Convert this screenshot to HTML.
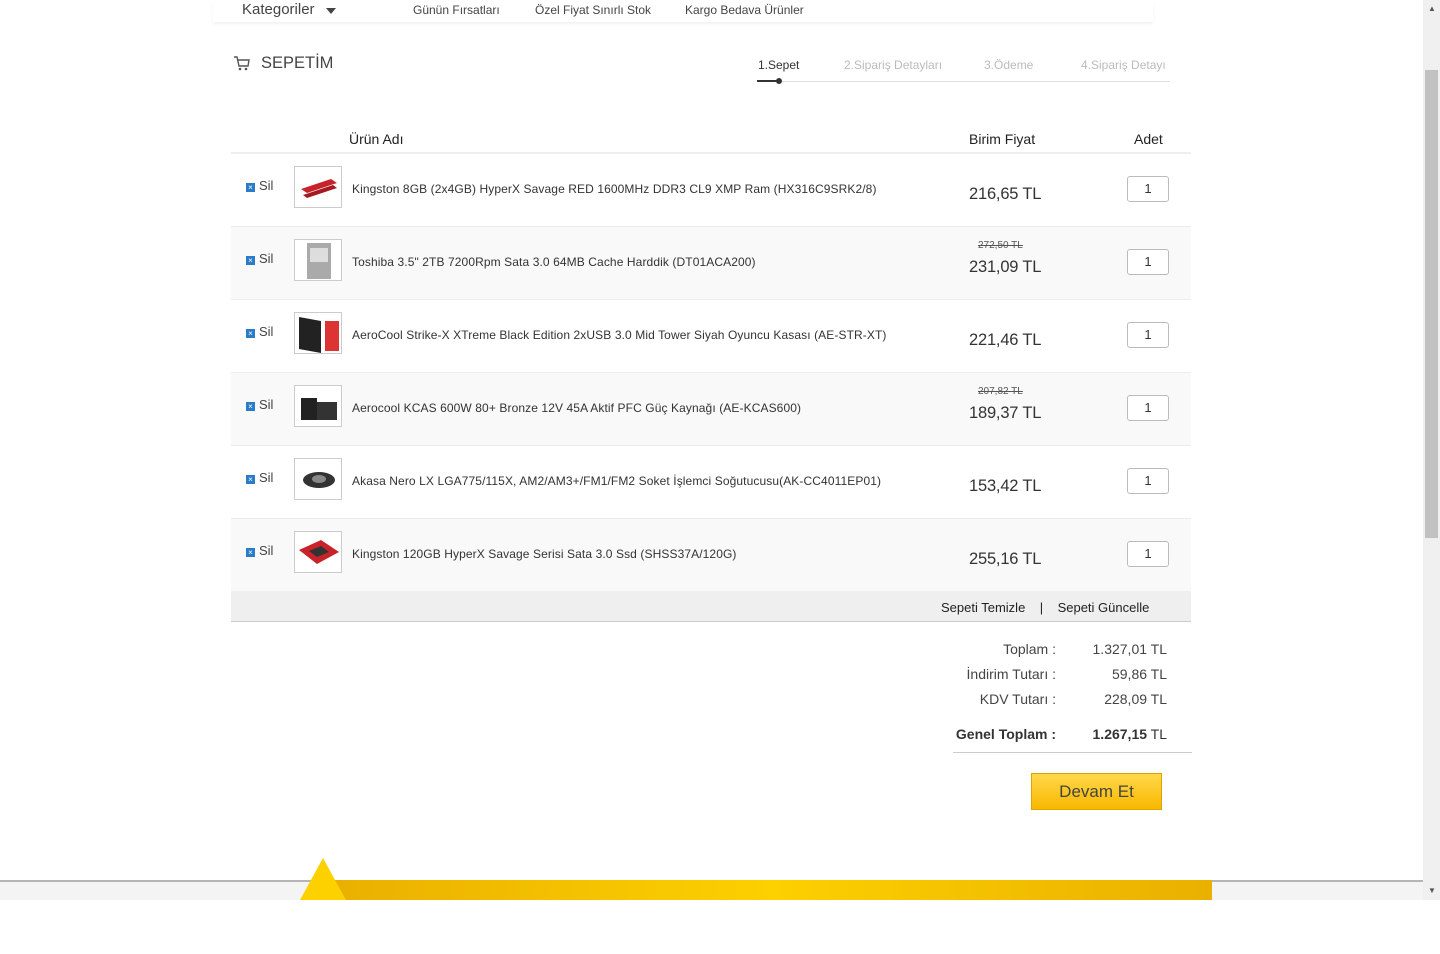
<!DOCTYPE html>
<html><head><meta charset="utf-8"><style>
*{margin:0;padding:0;box-sizing:border-box}
body{width:1440px;height:954px;background:#fff;font-family:"Liberation Sans",Arial,sans-serif;color:#333;position:relative;overflow:hidden}
.a{position:absolute;white-space:nowrap}
.row{position:absolute;left:231px;width:960px;height:73px;border-bottom:1px solid #ececec}
.sil{position:absolute;left:15px;top:24px;font-size:13px;color:#444}
.sil i{display:inline-block;width:9px;height:9px;background:#2b7bc8;margin-right:4px;vertical-align:0;color:#fff;font-size:8px;line-height:9px;text-align:center;font-style:normal}
.img{position:absolute;left:63px;top:12px;width:48px;height:42px;border:1px solid #ccc;background:#fff;overflow:hidden}
.nm{position:absolute;left:121px;top:28px;font-size:12px;color:#333;letter-spacing:0.1px}
.pr{position:absolute;left:738px;top:31px;font-size:16.5px;color:#333;letter-spacing:-0.2px}
.old{position:absolute;left:747px;top:13px;font-size:10px;color:#555;text-decoration:line-through}
.q{position:absolute;left:896px;top:22px;width:42px;height:26px;border:1px solid #bbb;border-radius:3px;background:#fff;font-size:13px;text-align:center;line-height:24px}
</style></head><body>
<div class="a" style="left:213px;top:0;width:940px;height:22px;box-shadow:0 2px 3px rgba(0,0,0,.06)"></div>
<div class="a" style="left:242px;top:1px;font-size:15px;color:#444">Kategoriler</div>
<div class="a" style="left:326px;top:8px;width:0;height:0;border-left:5px solid transparent;border-right:5px solid transparent;border-top:6px solid #444"></div>
<div class="a" style="left:413px;top:3px;font-size:12px;color:#444">Günün Fırsatları</div>
<div class="a" style="left:535px;top:3px;font-size:12px;color:#444">Özel Fiyat Sınırlı Stok</div>
<div class="a" style="left:685px;top:3px;font-size:12px;color:#444">Kargo Bedava Ürünler</div>
<svg class="a" style="left:234px;top:56px" width="16" height="15" viewBox="0 0 16 15"><path d="M0 1h3l2 9h9l1-6H4" fill="none" stroke="#555" stroke-width="1.4"/><circle cx="6" cy="13" r="1.3" fill="#555"/><circle cx="12" cy="13" r="1.3" fill="#555"/></svg>
<div class="a" style="left:261px;top:54px;font-size:16.5px;color:#444">SEPETİM</div>
<div class="a" style="left:758px;top:58px;font-size:12px;color:#333">1.Sepet</div>
<div class="a" style="left:844px;top:58px;font-size:12px;color:#bbb">2.Sipariş Detayları</div>
<div class="a" style="left:984px;top:58px;font-size:12px;color:#bbb">3.Ödeme</div>
<div class="a" style="left:1081px;top:58px;font-size:12px;color:#bbb">4.Sipariş Detayı</div>
<div class="a" style="left:757px;top:81px;width:413px;height:1px;background:#ddd"></div>
<div class="a" style="left:757px;top:80px;width:22px;height:2px;background:#333"></div>
<div class="a" style="left:776px;top:78px;width:6px;height:6px;border-radius:50%;background:#333"></div>
<div class="a" style="left:349px;top:131px;font-size:14px;color:#222">Ürün Adı</div>
<div class="a" style="left:969px;top:131px;font-size:14px;color:#222">Birim Fiyat</div>
<div class="a" style="left:1134px;top:131px;font-size:14px;color:#222">Adet</div>
<div class="a" style="left:231px;top:152px;width:960px;height:2px;background:#eee"></div>

<div class="row" style="top:154px;background:#fff"><div class="sil"><i>×</i>Sil</div><div class="img"><svg width="48" height="42"><path d="M6 22l30-10 6 4-30 10z" fill="#c8232a"/><path d="M8 28l30-10 4 3-30 10z" fill="#a51a20"/></svg></div><div class="nm">Kingston 8GB (2x4GB) HyperX Savage RED 1600MHz DDR3 CL9 XMP Ram (HX316C9SRK2/8)</div><div class="pr">216,65 TL</div><div class="q">1</div></div>
<div class="row" style="top:227px;background:#f9f9f9"><div class="sil"><i>×</i>Sil</div><div class="img"><svg width="48" height="42"><rect x="12" y="3" width="24" height="36" fill="#aaa"/><rect x="15" y="8" width="18" height="14" fill="#ddd"/></svg></div><div class="old">272,50 TL</div><div class="nm">Toshiba 3.5" 2TB 7200Rpm Sata 3.0 64MB Cache Harddik (DT01ACA200)</div><div class="pr">231,09 TL</div><div class="q">1</div></div>
<div class="row" style="top:300px;background:#fff"><div class="sil"><i>×</i>Sil</div><div class="img"><svg width="48" height="42"><path d="M4 4l22 4v32l-22-4z" fill="#222"/><rect x="30" y="8" width="14" height="30" fill="#d33"/></svg></div><div class="nm">AeroCool Strike-X XTreme Black Edition 2xUSB 3.0 Mid Tower Siyah Oyuncu Kasası (AE-STR-XT)</div><div class="pr">221,46 TL</div><div class="q">1</div></div>
<div class="row" style="top:373px;background:#f9f9f9"><div class="sil"><i>×</i>Sil</div><div class="img"><svg width="48" height="42"><rect x="6" y="12" width="16" height="22" fill="#222"/><rect x="22" y="16" width="20" height="18" fill="#333"/></svg></div><div class="old">207,82 TL</div><div class="nm">Aerocool KCAS 600W 80+ Bronze 12V 45A Aktif PFC Güç Kaynağı (AE-KCAS600)</div><div class="pr">189,37 TL</div><div class="q">1</div></div>
<div class="row" style="top:446px;background:#fff"><div class="sil"><i>×</i>Sil</div><div class="img"><svg width="48" height="42"><ellipse cx="24" cy="21" rx="16" ry="8" fill="#333"/><ellipse cx="24" cy="20" rx="7" ry="4" fill="#888"/></svg></div><div class="nm">Akasa Nero LX LGA775/115X, AM2/AM3+/FM1/FM2 Soket İşlemci Soğutucusu(AK-CC4011EP01)</div><div class="pr">153,42 TL</div><div class="q">1</div></div>
<div class="row" style="top:519px;background:#f9f9f9"><div class="sil"><i>×</i>Sil</div><div class="img"><svg width="48" height="42"><path d="M4 18l22-10 18 12-22 12z" fill="#c8232a"/><path d="M14 19l12-5 8 6-12 5z" fill="#333"/></svg></div><div class="nm">Kingston 120GB HyperX Savage Serisi Sata 3.0 Ssd (SHSS37A/120G)</div><div class="pr">255,16 TL</div><div class="q">1</div></div>

<div class="a" style="left:231px;top:591px;width:960px;height:31px;background:#efefef;border-bottom:1px solid #ccc"></div>
<div class="a" style="left:941px;top:600px;font-size:13px;color:#222">Sepeti Temizle &nbsp;&nbsp;&nbsp;| &nbsp;&nbsp;&nbsp;Sepeti Güncelle</div>

<div class="a" style="right:384px;top:637px;font-size:14px;color:#444;text-align:right;line-height:25px">Toplam :<br>İndirim Tutarı :<br>KDV Tutarı :</div>
<div class="a" style="right:273px;top:637px;font-size:14px;color:#444;text-align:right;line-height:25px">1.327,01 TL<br>59,86 TL<br>228,09 TL</div>
<div class="a" style="right:384px;top:726px;font-size:14px;font-weight:bold;color:#333">Genel Toplam :</div>
<div class="a" style="right:273px;top:726px;font-size:14px;color:#333"><b>1.267,15</b> TL</div>
<div class="a" style="left:953px;top:752px;width:239px;height:1px;background:#ccc"></div>
<div class="a" style="left:1031px;top:773px;width:131px;height:37px;background:linear-gradient(#ffd84a,#f9b800);border:1px solid #e0a000;font-size:17px;color:#444;text-align:center;line-height:35px">Devam Et</div>

<div class="a" style="left:0;top:880px;width:1423px;height:20px;background:#f4f4f4;border-top:2px solid #b5b5b5"></div>
<div class="a" style="left:335px;top:880px;width:877px;height:20px;background:linear-gradient(90deg,#eab000,#fdd000 50%,#eab000)"></div>
<div class="a" style="left:300px;top:858px;width:0;height:0;border-left:23px solid transparent;border-right:23px solid transparent;border-bottom:42px solid #fdd000"></div>
<div class="a" style="left:1423px;top:0;width:17px;height:900px;background:#f0f0f0"></div>
<div class="a" style="left:1425px;top:70px;width:13px;height:468px;background:#c1c1c1"></div>
<div class="a" style="left:1428px;top:4px;font-size:8px;color:#555">▲</div>
<div class="a" style="left:1428px;top:886px;font-size:8px;color:#555">▼</div>
</body></html>
